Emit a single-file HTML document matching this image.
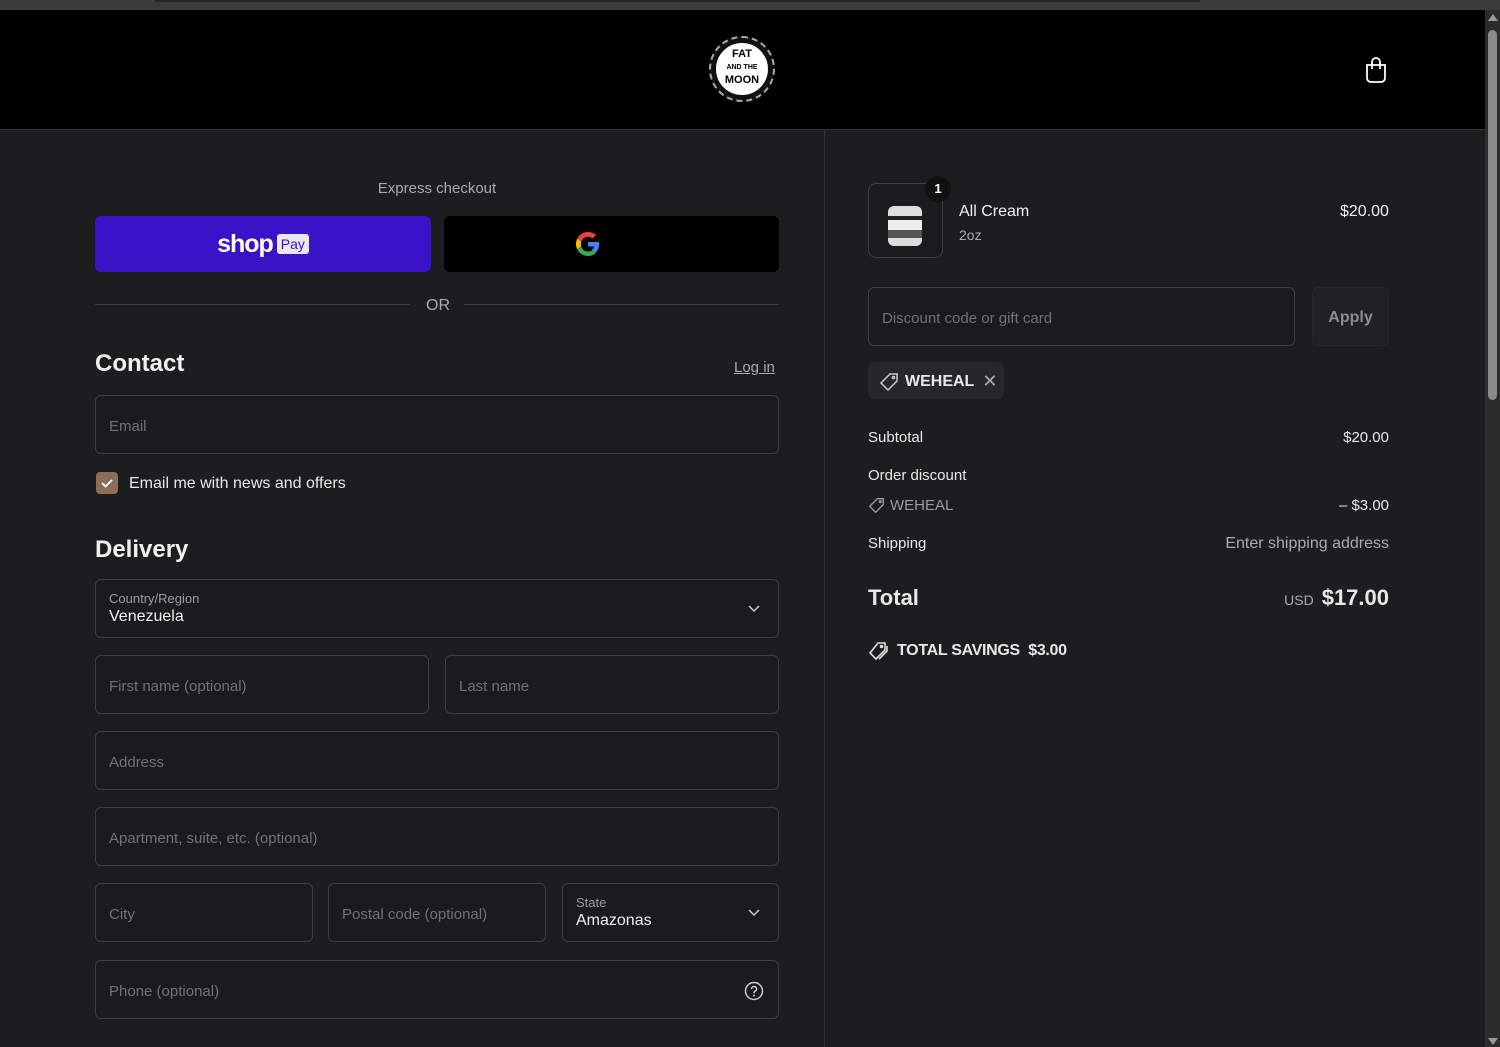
<!DOCTYPE html>
<html><head><meta charset="utf-8"><style>
*{box-sizing:border-box;margin:0;padding:0}
body{width:1500px;height:1047px;overflow:hidden;background:#1c1d1f;font-family:"Liberation Sans",sans-serif;color:#e8e8e8;position:relative}
.a{position:absolute}
.inp{position:absolute;border:1px solid #3d3e41;border-radius:6px;background:#1a1b1d;color:#6f7175;font-size:15px;padding-left:13px;padding-top:3px;display:flex;align-items:center}
.lbl{font-size:13px;color:#9a9ca0}
.row{position:absolute;left:868px;width:521px;font-size:15px;display:flex;justify-content:space-between}
.chev{position:absolute;right:18px;top:50%;margin-top:-4px}
</style></head><body>
<div class="a" style="left:0;top:0;width:1500px;height:10px;background:#3b3b3b"></div>
<div class="a" style="left:155px;top:0;width:1045px;height:2px;background:#262626"></div>
<div class="a" style="left:0;top:10px;width:1485px;height:119px;background:#000"></div>
<div class="a" style="left:0;top:129px;width:1485px;height:1px;background:#333"></div>
<div class="a" style="left:824px;top:130px;width:1px;height:917px;background:#333"></div>
<div class="a" style="left:1485px;top:10px;width:15px;height:1037px;background:#2b2b2b"></div>
<div class="a" style="left:1488px;top:30px;width:9px;height:370px;background:#8a8a8a;border-radius:5px"></div>
<div class="a" style="left:1488px;top:14px;width:0;height:0;border-left:5px solid transparent;border-right:5px solid transparent;border-bottom:7px solid #9a9a9a"></div>
<div class="a" style="left:1488px;top:1038px;width:0;height:0;border-left:5px solid transparent;border-right:5px solid transparent;border-top:7px solid #9a9a9a"></div>
<div class="a" style="left:709px;top:36px;width:66px;height:66px;border-radius:50%;background:#111;border:2px dashed #aaa"></div>
<div class="a" style="left:714px;top:41px;width:56px;height:56px;border-radius:50%;background:#fff;border:2px solid #111;color:#000;font-size:11px;font-weight:bold;text-align:center;line-height:12px;padding-top:5px">FAT<br><span style="font-size:7px">AND THE</span><br>MOON</div>
<svg class="a" style="left:1364px;top:56px" width="24" height="28" viewBox="0 0 24 28" fill="none" stroke="#fff" stroke-width="1.8"><path d="M3 9h18v13a4 4 0 0 1-4 4H7a4 4 0 0 1-4-4z"/><path d="M8 13V6a4 4 0 0 1 8 0v7"/></svg>
<div class="a" style="left:95px;width:684px;top:180px;text-align:center;font-size:15px;color:#a8aaae">Express checkout</div>
<div class="a" style="left:95px;top:216px;width:336px;height:56px;background:#3a12c7;border-radius:6px;display:flex;align-items:center;justify-content:center;gap:4px"><span style="color:#fff;font-weight:bold;font-size:25px;letter-spacing:-1px">shop</span><span style="background:#e8e6f7;color:#3a12c7;font-size:14px;padding:2px 4px;border-radius:3px">Pay</span></div>
<div class="a" style="left:444px;top:216px;width:335px;height:56px;background:#000;border-radius:6px"></div>
<svg class="a" style="left:576px;top:232px" width="24" height="24" viewBox="0 0 48 48"><path fill="#EA4335" d="M24 9.5c3.5 0 6.6 1.2 9.1 3.6l6.8-6.8C35.8 2.4 30.3 0 24 0 14.6 0 6.6 5.4 2.6 13.3l7.9 6.2C12.4 13.7 17.7 9.5 24 9.5z"/><path fill="#4285F4" d="M46.1 24.5c0-1.6-.1-3.1-.4-4.5H24v9h12.4c-.5 2.9-2.2 5.3-4.6 7l7.2 5.6c4.2-3.9 7.1-9.7 7.1-17.1z"/><path fill="#FBBC05" d="M10.5 28.6c-.5-1.4-.8-3-.8-4.6s.3-3.2.8-4.6l-7.9-6.2C.9 16.5 0 20.1 0 24s.9 7.5 2.6 10.8l7.9-6.2z"/><path fill="#34A853" d="M24 48c6.5 0 11.9-2.1 15.9-5.8l-7.2-5.6c-2.2 1.5-5.1 2.4-8.7 2.4-6.3 0-11.6-4.2-13.5-10l-7.9 6.2C6.6 42.6 14.6 48 24 48z"/></svg>
<div class="a" style="left:95px;top:304px;width:315px;height:1px;background:#3a3b3e"></div>
<div class="a" style="left:464px;top:304px;width:315px;height:1px;background:#3a3b3e"></div>
<div class="a" style="left:426px;top:297px;font-size:16px;color:#a8aaae">OR</div>
<div class="a" style="left:95px;top:350px;font-size:24px;font-weight:bold;color:#f0f0f0">Contact</div>
<div class="a" style="left:734px;top:359px;font-size:15px;color:#a8aaae;text-decoration:underline">Log in</div>
<div class="inp" style="left:95px;top:395px;width:684px;height:59px">Email</div>
<div class="a" style="left:96px;top:472px;width:22px;height:22px;background:#8a6e57;border-radius:4px"><svg width="22" height="22" viewBox="0 0 22 22"><path d="M6 11l3.5 3.5L16 8" stroke="#fff" stroke-width="1.8" fill="none"/></svg></div>
<div class="a" style="left:129px;top:475px;font-size:16px;color:#e8e8e8">Email me with news and offers</div>
<div class="a" style="left:95px;top:536px;font-size:24px;font-weight:bold;color:#f0f0f0">Delivery</div>
<div class="inp" style="left:95px;top:579px;width:684px;height:59px;display:block;padding-top:11px"><div class="lbl">Country/Region</div><div style="color:#f0f0f0;font-size:16px;margin-top:2px">Venezuela</div><svg class="chev" width="12" height="8" viewBox="0 0 12 8"><path d="M1 1l5 5 5-5" stroke="#ccc" stroke-width="1.5" fill="none"/></svg></div>
<div class="inp" style="left:95px;top:655px;width:334px;height:59px">First name (optional)</div>
<div class="inp" style="left:445px;top:655px;width:334px;height:59px">Last name</div>
<div class="inp" style="left:95px;top:731px;width:684px;height:59px">Address</div>
<div class="inp" style="left:95px;top:807px;width:684px;height:59px">Apartment, suite, etc. (optional)</div>
<div class="inp" style="left:95px;top:883px;width:218px;height:59px">City</div>
<div class="inp" style="left:328px;top:883px;width:218px;height:59px">Postal code (optional)</div>
<div class="inp" style="left:562px;top:883px;width:217px;height:59px;display:block;padding-top:11px"><div class="lbl">State</div><div style="color:#f0f0f0;font-size:16px;margin-top:2px">Amazonas</div><svg class="chev" width="12" height="8" viewBox="0 0 12 8"><path d="M1 1l5 5 5-5" stroke="#ccc" stroke-width="1.5" fill="none"/></svg></div>
<div class="inp" style="left:95px;top:960px;width:684px;height:59px">Phone (optional)<svg class="a" style="right:14px;top:20px" width="20" height="20" viewBox="0 0 20 20"><circle cx="10" cy="10" r="8.5" stroke="#ccc" stroke-width="1.5" fill="none"/><path d="M7.5 8a2.5 2.5 0 1 1 3.5 2.3c-.7.3-1 .8-1 1.5v.5" stroke="#ccc" stroke-width="1.5" fill="none"/><circle cx="10" cy="14.5" r="1" fill="#ccc"/></svg></div>
<div class="a" style="left:868px;top:183px;width:75px;height:75px;border:1px solid #3d3e41;border-radius:8px;background:#1a1b1d"></div>
<div class="a" style="left:888px;top:206px;width:34px;height:40px;border-radius:6px;background:linear-gradient(#ddd 0 25%,#222 25% 35%,#eee 35% 60%,#555 60% 80%,#ddd 80%)"></div>
<div class="a" style="left:925px;top:176px;width:26px;height:26px;border-radius:50%;background:#111;color:#fff;font-size:13px;font-weight:bold;text-align:center;line-height:26px">1</div>
<div class="a" style="left:959px;top:203px;font-size:16px;color:#f0f0f0">All Cream</div>
<div class="a" style="left:959px;top:227px;font-size:14px;color:#a8aaae">2oz</div>
<div class="a" style="left:1340px;top:203px;font-size:16px;color:#f0f0f0">$20.00</div>
<div class="inp" style="left:868px;top:287px;width:427px;height:59px">Discount code or gift card</div>
<div class="a" style="left:1312px;top:287px;width:77px;height:59px;border-radius:6px;background:#202124;border:1px solid #26272a;color:#8a8c90;font-weight:bold;font-size:16px;text-align:center;line-height:60px">Apply</div>
<div class="a" style="left:868px;top:362px;width:136px;height:37px;border-radius:6px;background:#26272a;display:flex;align-items:center;padding-left:11px;padding-top:2px;gap:6px;font-size:16px;font-weight:bold;color:#e8e8e8">
<svg width="20" height="20" viewBox="0 0 20 20" fill="none" stroke="#ccc" stroke-width="1.5"><path d="M11 2h7v7l-9 9-7-7z"/><circle cx="14.5" cy="5.5" r="1"/></svg>WEHEAL<span style="color:#aaa;font-weight:normal;font-size:18px;margin-left:2px">✕</span></div>
<div class="row" style="top:429px"><span>Subtotal</span><span>$20.00</span></div>
<div class="row" style="top:467px"><span>Order discount</span></div>
<div class="row" style="top:497px;color:#9a9ca0"><span style="display:flex;align-items:center;gap:5px"><svg width="17" height="17" viewBox="0 0 20 20" fill="none" stroke="#9a9ca0" stroke-width="1.6"><path d="M11 2h7v7l-9 9-7-7z"/><circle cx="14.5" cy="5.5" r="1"/></svg>WEHEAL</span><span style="color:#e8e8e8">– $3.00</span></div>
<div class="row" style="top:535px"><span>Shipping</span><span style="color:#a8aaae;font-size:16px">Enter shipping address</span></div>
<div class="row" style="top:585px;align-items:baseline"><span style="font-size:22px;font-weight:bold">Total</span><span><span style="font-size:14px;color:#a8aaae;margin-right:8px">USD</span><span style="font-size:22px;font-weight:bold">$17.00</span></span></div>
<div class="a" style="left:868px;top:641px;display:flex;align-items:center;gap:8px;font-size:16px;font-weight:bold;color:#e8e8e8;letter-spacing:-0.3px"><svg width="21" height="20" viewBox="0 0 21 20" fill="none" stroke="#ddd" stroke-width="1.6"><path d="M10 2h7v7l-9 9-6-6z"/><path d="M19 5v5l-8 8"/><circle cx="13.5" cy="5.5" r="1"/></svg>TOTAL SAVINGS&nbsp;&nbsp;$3.00</div>
</body></html>
